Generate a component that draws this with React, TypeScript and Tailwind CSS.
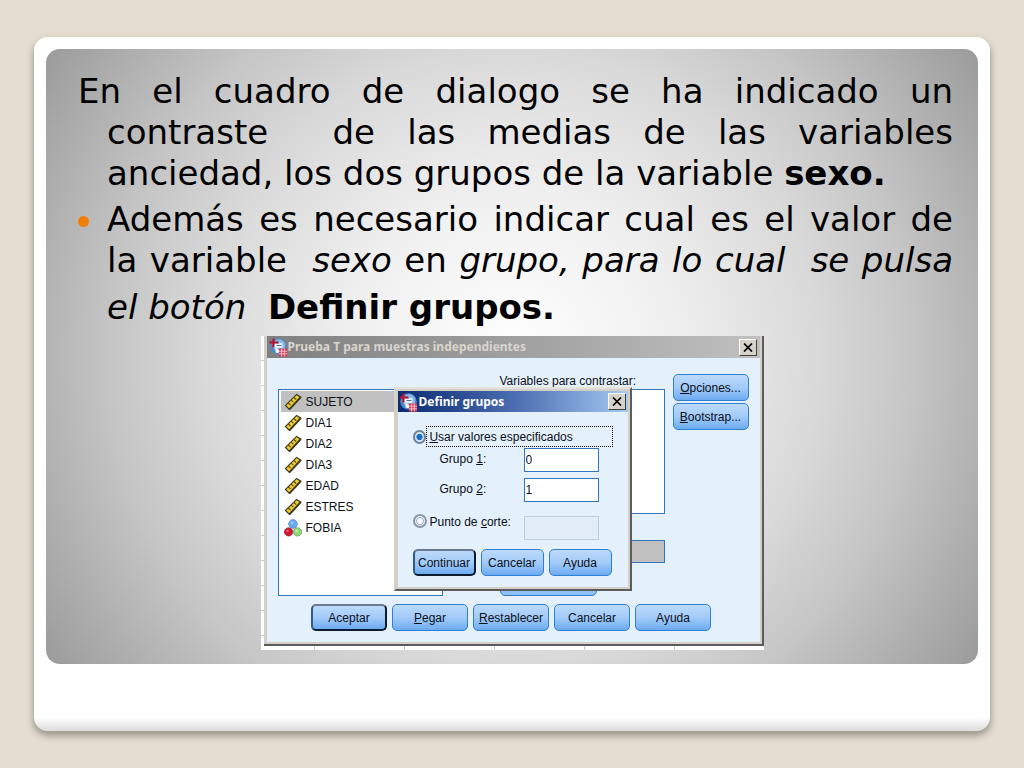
import React from "react";
import type { ReactNode } from "react";

const SMALL = "font-['Liberation_Sans',Arial,sans-serif] text-[12px] leading-4 text-[#0a0f18]";

function AppIcon() {
  return (
    <svg viewBox="0 0 20 20" className="h-5 w-5 shrink-0" aria-hidden="true">
      <circle cx="10.500" cy="9.500" r="8.300" fill="#4f86c4" />
      <circle cx="11" cy="8.500" r="6.200" fill="#8fb8e4" />
      <path d="M6 6.500h8v4H6zM8 10.500v5h5" fill="#f1f7fd" stroke="#dcebf8" strokeWidth="1" />
      <path d="M8.500 8.500h5M10 4v3" stroke="#3c74b4" strokeWidth="1" />
      <path d="M5.500 1.500v9M1.500 5.500h8.500" stroke="#b80f2e" strokeWidth="2" fill="none" />
      <rect x="11" y="11.500" width="8" height="8" fill="#dc3a56" />
      <path d="M11 14.200h8M11 16.800h8M13.600 11.500v8M16.300 11.500v8" stroke="#ffd5dc" strokeWidth="0.800" />
    </svg>
  );
}

function RulerIcon() {
  return (
    <svg viewBox="0 0 18 18" className="h-[18px] w-[18px] shrink-0" aria-hidden="true">
      <path d="M1.500 12.400 12.600 1.400 16.800 4.200 5.400 16.400Z" fill="#eccb2c" stroke="#3d3a2a" strokeWidth="1.200" />
      <path d="M4.200 10 6.600 12M7 7.200 9.400 9.200M9.800 4.500 12.200 6.500" stroke="#5b4c12" strokeWidth="1.100" />
      <path d="M5.400 16.400 16.800 4.200" stroke="#3d3a2a" strokeWidth="1.900" />
    </svg>
  );
}

function NominalIcon() {
  return (
    <svg viewBox="0 0 18 18" className="h-[18px] w-[18px] shrink-0" aria-hidden="true">
      <circle cx="9" cy="5" r="4.400" fill="#6aa8ee" stroke="#4a86c8" strokeWidth="0.600" />
      <circle cx="4.600" cy="12.900" r="4.200" fill="#cf1632" stroke="#8f1024" strokeWidth="0.600" />
      <circle cx="13.400" cy="12.900" r="4.200" fill="#93d877" stroke="#4f8a3c" strokeWidth="0.600" />
      <circle cx="8.200" cy="4" r="1.400" fill="#9ccbf8" />
      <circle cx="3.600" cy="11.800" r="1.100" fill="#ee7a88" />
      <circle cx="12.600" cy="11.800" r="1.200" fill="#c9f0b8" />
    </svg>
  );
}

function CloseButton() {
  return (
    <button
      type="button"
      aria-label="Cerrar"
      className="flex h-[17px] w-[18px] shrink-0 items-center justify-center border border-t-white border-r-[#404040] border-b-[#404040] border-l-white bg-[#d6d2ca]"
    >
      <svg viewBox="0 0 10 9" className="h-[9px] w-[10px]" aria-hidden="true">
        <path d="M1 0.500 9 8.500M9 0.500 1 8.500" stroke="#000" strokeWidth="1.700" />
      </svg>
    </button>
  );
}

function DialogButton({ children, primary = false, width = "w-[76px]" }: { children: ReactNode; primary?: boolean; width?: string }) {
  const edge = primary
    ? "border-2 border-t-[#6b7a90] border-r-[#0d1c33] border-b-[#0d1c33] border-l-[#2f5a8e]"
    : "border border-[#2f7fd2]";
  return (
    <button
      type="button"
      className={`${SMALL} ${edge} ${width} flex h-[27px] items-center justify-center rounded-[5px] bg-linear-to-b from-[#bcdafb] via-[#a2cbf8] to-[#6cabf0] whitespace-nowrap`}
    >
      <span>{children}</span>
    </button>
  );
}

const variables = ["SUJETO", "DIA1", "DIA2", "DIA3", "EDAD", "ESTRES", "FOBIA"];

function DefineGroups() {
  return (
    <section
      aria-label="Definir grupos"
      className="absolute top-[51px] left-[133px] w-[238px] border-2 border-t-[#e4e1da] border-r-[#5c5c5c] border-b-[#5c5c5c] border-l-[#d4d0c8] bg-[#d4d0c8] p-[2px]"
    >
      <header className="flex h-[21px] items-center bg-linear-to-r from-[#0c2a72] via-[#4a6cb0] to-[#a6caf0] pr-[2px]">
        <AppIcon />
        <h2 className="flex-1 pl-px font-['Noto_Sans','DejaVu_Sans',sans-serif] text-[12px] leading-4 font-bold text-white">Definir grupos</h2>
        <CloseButton />
      </header>
      <form className={`${SMALL} bg-[#e4f0fc] px-[15px] pt-[14px] pb-[11px]`} onSubmit={(e) => e.preventDefault()}>
        <div className="flex items-center">
          <input
            id="specified"
            type="radio"
            name="mode"
            defaultChecked
            className="h-[14px] w-[14px] appearance-none rounded-full border-2 border-[#6e8499] bg-[radial-gradient(circle,#1c6fc4_40%,#cfe2f4_52%)]"
          />
          <label htmlFor="specified" className="flex h-[21px] w-[188px] items-center border border-dotted border-black pl-[2px]">
            <span><u>U</u>sar valores especificados</span>
          </label>
        </div>
        <div className="grid grid-cols-[84px_75px] items-start gap-y-[6px] pt-px pl-[27px]">
          <label htmlFor="group1" className="pt-[3px]">Grupo <u>1</u>:</label>
          <input id="group1" defaultValue="0" className="h-6 w-[75px] border border-[#2f75c0] bg-white pl-px" />
          <label htmlFor="group2" className="pt-[3px]">Grupo <u>2</u>:</label>
          <input id="group2" defaultValue="1" className="h-6 w-[75px] border border-[#2f75c0] bg-white pl-px" />
        </div>
        <div className="flex items-start pt-3">
          <input
            id="cut"
            type="radio"
            name="mode"
            className="h-[14px] w-[14px] appearance-none rounded-full border-2 border-[#8b99a6] bg-[radial-gradient(circle,#f4f9fe_35%,#9fb4c6_50%,#e4f0fc_60%)]"
          />
          <label htmlFor="cut" className="w-[97px] pl-[3px]">Punto de <u>c</u>orte:</label>
          <input aria-label="Valor de corte" disabled className="mt-[2px] h-6 w-[75px] border border-[#c2ccd8] bg-[#e2edf8]" />
        </div>
        <div className="flex gap-[5px] pt-[9px]">
          <DialogButton width="w-[63px]" primary>Continuar</DialogButton>
          <DialogButton width="w-[63px]">Cancelar</DialogButton>
          <DialogButton width="w-[63px]">Ayuda</DialogButton>
        </div>
      </form>
    </section>
  );
}

function TestDialog() {
  return (
    <div className="relative mx-auto w-[503px] bg-white bg-[repeating-linear-gradient(to_bottom,transparent_0_24px,#c9ccd2_24px_25px),repeating-linear-gradient(to_right,transparent_0_53px,#c9ccd2_53px_54px,transparent_54px_90px)] pb-1 pl-[3px]">
      <section
        aria-label="Prueba T para muestras independientes"
        className="border-r-2 border-b-2 border-r-[#5c5c5c] border-b-[#5c5c5c] bg-[#d4d0c8] pr-[2px] pb-[2px] pl-[3px]"
      >
        <header className="flex h-[22px] items-center bg-linear-to-r from-[#808080] to-[#c0c0c0] pr-[3px] pl-px">
          <AppIcon />
          <h1 className="flex-1 font-['Noto_Sans','DejaVu_Sans',sans-serif] text-[12px] leading-4 font-bold text-[#d8d5ce]">
            Prueba T para muestras independientes
          </h1>
          <CloseButton />
        </header>
        <div className="bg-[#e4f0fc] pt-[15px] pb-[11px]">
          <div className="flex pl-[11px]">
            <ul className={`${SMALL} mt-4 h-[207px] w-[165px] border border-[#2f75c0] bg-white pt-px pl-[2px]`}>
              {variables.map((name, i) => (
                <li key={name} className={`flex h-[21px] items-center pl-[3px] ${i === 0 ? "bg-[#c0c0c0]" : ""}`}>
                  {name === "FOBIA" ? <NominalIcon /> : <RulerIcon />}
                  <span className="pl-1">{name}</span>
                </li>
              ))}
            </ul>
            <div className={`${SMALL} ml-[57px] flex w-[165px] flex-col`}>
              <span>Variables para contrastar:</span>
              <div className="h-[125px] border border-[#2f75c0] bg-white" />
              <div className="mt-[26px] h-[23px] border border-[#2f75c0] bg-[#c0c0c0]" />
              <div className="mt-[6px] h-[27px] w-[97px] rounded-[5px] border border-[#2f7fd2] bg-[#8fc0f5]" />
            </div>
            <div className="ml-2 flex flex-col gap-[2px] pt-px">
              <DialogButton><u>O</u>pciones...</DialogButton>
              <DialogButton><u>B</u>ootstrap...</DialogButton>
            </div>
          </div>
          <div className="flex justify-center gap-[5px] pt-2 pr-1">
            <DialogButton primary>Aceptar</DialogButton>
            <DialogButton><u>P</u>egar</DialogButton>
            <DialogButton><u>R</u>establecer</DialogButton>
            <DialogButton>Cancelar</DialogButton>
            <DialogButton>Ayuda</DialogButton>
          </div>
        </div>
      </section>
      <DefineGroups />
    </div>
  );
}

export default function App() {
  return (
    <div className="min-h-screen bg-[#e4ddd0] px-[34px] py-[37px]">
      <main className="rounded-[14px] bg-linear-to-t from-[#dcdcdc] via-white via-[14px] to-white px-3 pt-3 pb-[67px] shadow-[0_4px_6px_1px_rgba(90,90,80,0.5)]">
        <article className="rounded-[14px] bg-[radial-gradient(circle_at_center,#ffffff_0%,#efefef_30%,#d9d9d9_55%,#c5c5c5_72%,#9b9b9b_100%)] pt-[22px] pb-[14px]">
          <div className="pr-[25px] pb-[3px] pl-8 font-['DejaVu_Sans',Verdana,sans-serif] text-[34px] leading-[41px] whitespace-nowrap text-black">
            <p className="pl-[29px]">
              <span className="-ml-[29px] block [text-align-last:justify]">En el cuadro de dialogo se ha indicado un</span>
              <span className="block [text-align-last:justify]">contraste&nbsp; de las medias de las variables</span>
              <span className="block">anciedad, los dos grupos de la variable <b>sexo.</b></span>
            </p>
            <div className="flex pt-[5px]">
              <span className="flex h-[41px] w-[29px] shrink-0 items-center pt-1" aria-hidden="true">
                <span className="h-[11px] w-[11px] rounded-full bg-[#f07f09]" />
              </span>
              <p className="flex-1">
                <span className="block [text-align-last:justify]">Además es necesario indicar cual es el valor de</span>
                <span className="block [text-align-last:justify]">
                  la variable&nbsp; <i>sexo</i> en <i>grupo, para lo cual&nbsp; se pulsa</i>
                </span>
                <span className="block leading-[52px]"><i>el botón</i>&nbsp; <b>Definir grupos.</b></span>
              </p>
            </div>
          </div>
          <TestDialog />
        </article>
      </main>
    </div>
  );
}
